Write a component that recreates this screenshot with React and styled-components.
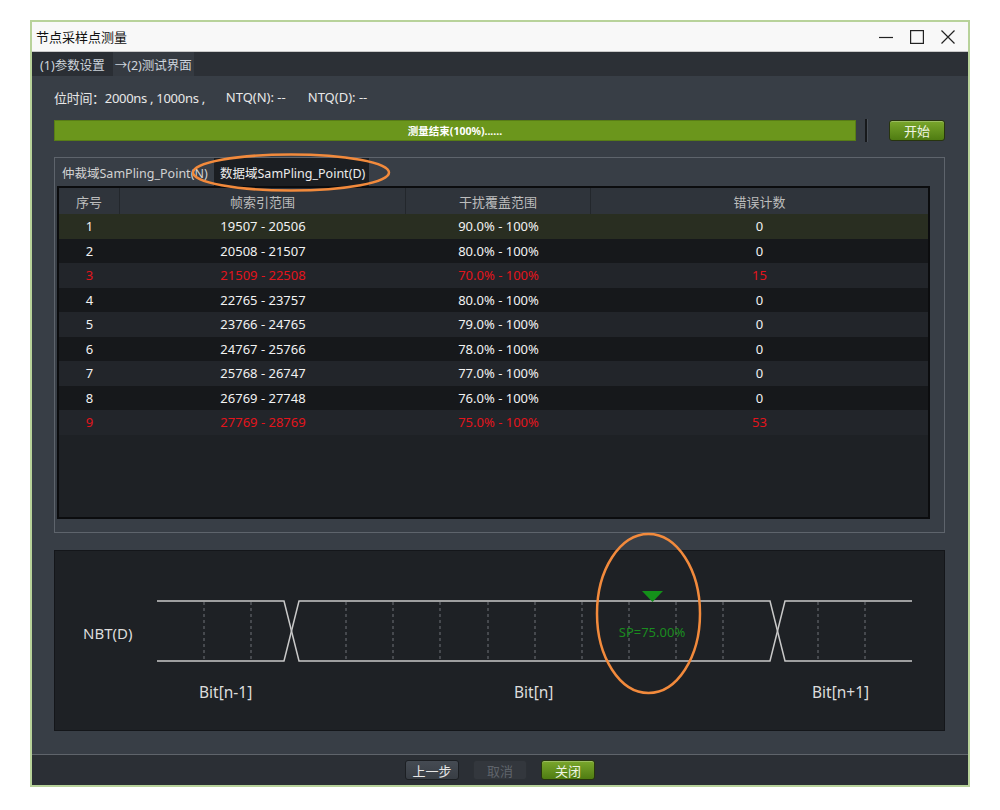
import React from 'react'
import styled, { createGlobalStyle } from 'styled-components'

const GlobalStyle = createGlobalStyle`
    html, body {
        margin: 0;
        padding: 0;
        background: #ffffff;
    }
    body {
        font-family: "Noto Sans", "Noto Sans CJK SC", sans-serif;
    }
`

const Page = styled.div`
    position: relative;
    width: 1000px;
    height: 810px;
    overflow: hidden;
`

const Window = styled.div`
    margin: 20px 0 0 30px;
    width: 940px;
    box-sizing: border-box;
    border: 2px solid #b8d29a;
    background: #383e46;
    display: flex;
    flex-direction: column;
`

const TitleBar = styled.div`
    height: 29px;
    display: flex;
    align-items: center;
    justify-content: space-between;
    background: #f8f8f8;
    border-bottom: 1px solid #c9c9c9;
    padding: 0 5px 0 4px;
`

const Title = styled.span`
    font-size: 13px;
    color: #111;
    font-family: "Noto Sans CJK SC", sans-serif;
`

const Controls = styled.div`
    display: flex;
`

const ControlButton = styled.div`
    width: 31px;
    height: 29px;
    display: flex;
    align-items: center;
    justify-content: center;
`

const StepBar = styled.div`
    height: 24px;
    display: flex;
    background: #2c3036;
`

const Step = styled.div`
    display: flex;
    align-items: center;
    padding: 0 ${p => p.$pad}px;
    font-size: 12.5px;
    color: #cdd4dc;
    background: ${p => p.$current ? '#353a41' : '#2a2e34'};
    white-space: nowrap;
`

const Body = styled.div`
    padding: 11px 23px 23px 22px;
    display: flex;
    flex-direction: column;
`

const InfoRow = styled.div`
    height: 20px;
    display: flex;
    align-items: center;
    font-size: 13px;
    color: #e8e8e8;
    white-space: nowrap;
`

const InfoItem = styled.span`
    margin-left: ${p => p.$gap || 0}px;
    letter-spacing: ${p => p.$tight ? '-0.3px' : '0'};
`

const ProgressRow = styled.div`
    margin-top: 13px;
    height: 21px;
    display: flex;
    align-items: stretch;
`

const ProgressBar = styled.div`
    flex: 1;
    background: #6b961c;
    border: 1px solid #587d16;
    display: flex;
    align-items: center;
    justify-content: center;
    font-size: 10.5px;
    font-weight: 700;
    color: #ffffff;
`

const Divider = styled.div`
    width: 2px;
    margin-left: 9px;
    margin-top: -1px;
    margin-bottom: -1px;
    background: #17191c;
    border-right: 1px solid #4a5058;
`

const GreenButton = styled.button`
    width: ${p => p.$w || 56}px;
    height: ${p => p.$h || 21}px;
    margin-left: ${p => p.$ml || 0}px;
    border: 1px solid #27340f;
    border-radius: 3px;
    background: linear-gradient(#7aa72c, #4f7c12);
    box-shadow: inset 0 1px 0 rgba(255, 255, 255, 0.25);
    color: #eef4e2;
    font-family: "Noto Sans CJK SC", sans-serif;
    font-size: 13px;
    padding: 0;
    display: flex;
    align-items: center;
    justify-content: center;
`

const TabBox = styled.div`
    margin-top: 16px;
    height: 376px;
    box-sizing: border-box;
    border: 1px solid #5e646c;
    padding: 0 14px 13px 1px;
    display: flex;
    flex-direction: column;
`

const Tabs = styled.div`
    height: 28px;
    display: flex;
`

const Tab = styled.div`
    width: ${p => p.$w}px;
    box-sizing: border-box;
    padding-left: 6px;
    display: flex;
    align-items: center;
    font-size: 12.5px;
    color: ${p => p.$active ? '#ececec' : '#d2d2d2'};
    background: ${p => p.$active ? '#1b1e22' : 'transparent'};
    white-space: nowrap;
    overflow: hidden;
`

const Table = styled.div`
    flex: 1;
    margin-left: 1px;
    border: 2px solid #0b0c0e;
    background: #1e2125;
    display: flex;
    flex-direction: column;
`

const Row = styled.div`
    display: grid;
    grid-template-columns: 61px 286px 185px 1fr;
    height: ${p => p.$header ? 26 : 24.5}px;
    background: ${p => p.$bg};
`

const Cell = styled.div`
    display: flex;
    align-items: center;
    justify-content: center;
    font-size: 13px;
    color: ${p => p.$red ? '#e3141c' : '#f2f2f2'};
    white-space: nowrap;
`

const HeadCell = styled(Cell)`
    color: #bdbdbd;
    font-family: "Noto Sans CJK SC", sans-serif;
    border-right: 1px solid #23272c;
    &:last-child {
        border-right: none;
    }
`

const WavePanel = styled.div`
    margin-top: 17px;
    height: 181px;
    box-sizing: border-box;
    border: 1px solid #14161a;
    background: #1e2125;
`

const BottomBar = styled.div`
    height: 30px;
    border-top: 1px solid #5f646b;
    background: #2b2f35;
    display: flex;
    align-items: center;
    justify-content: center;
    gap: 14px;
`

const DarkButton = styled.button`
    width: 54px;
    height: 20px;
    border: 1px solid ${p => p.$disabled ? '#2c3035' : '#1c1f23'};
    border-radius: 3px;
    background: ${p => p.$disabled ? '#33373d' : 'linear-gradient(#454b53, #383d44)'};
    color: ${p => p.$disabled ? '#5f646b' : '#e6e6e6'};
    font-family: "Noto Sans CJK SC", sans-serif;
    font-size: 13px;
    padding: 0;
    display: flex;
    align-items: center;
    justify-content: center;
`

const Overlay = styled.svg`
    position: absolute;
    left: 0;
    top: 0;
    pointer-events: none;
`

const rows = [
    ['1', '19507 - 20506', '90.0% - 100%', '0'],
    ['2', '20508 - 21507', '80.0% - 100%', '0'],
    ['3', '21509 - 22508', '70.0% - 100%', '15', true],
    ['4', '22765 - 23757', '80.0% - 100%', '0'],
    ['5', '23766 - 24765', '79.0% - 100%', '0'],
    ['6', '24767 - 25766', '78.0% - 100%', '0'],
    ['7', '25768 - 26747', '77.0% - 100%', '0'],
    ['8', '26769 - 27748', '76.0% - 100%', '0'],
    ['9', '27769 - 28769', '75.0% - 100%', '53', true],
]

const rowBg = (i) => {
    if (i === 0) return '#292e21'
    return i % 2 === 1 ? '#16181b' : '#22252a'
}

const dashes = [149, 196, 291, 338, 385, 433, 480, 527, 574, 621, 668, 763, 810]

const Waveform = () => (
    <svg width="888" height="179" viewBox="0 0 888 179" style={{ display: 'block' }}>
        {dashes.map(x => (
            <line key={x} x1={x} y1="51" x2={x} y2="110" stroke="#6e7278" strokeWidth="1" strokeDasharray="3 3" />
        ))}
        <g stroke="#c9c9c9" strokeWidth="1.5" fill="none">
            <polyline points="102,50 229,50 244,110 715,110 730,50 857,50" />
            <polyline points="102,110 229,110 244,50 715,50 730,110 857,110" />
        </g>
        <polygon points="587,40 608,40 597.5,51" fill="#14911a" />
        <g fontFamily="Noto Sans, sans-serif" fill="#dcdcdc">
            <text x="28" y="88" fontSize="15">NBT(D)</text>
            <text x="144" y="147" fontSize="15.5">Bit[n-1]</text>
            <text x="459" y="147" fontSize="15.5">Bit[n]</text>
            <text x="757" y="147" fontSize="15.5">Bit[n+1]</text>
        </g>
        <text x="597" y="86" fontSize="13" textAnchor="middle" fill="#1a8c1f" fontFamily="Noto Sans, sans-serif">SP=75.00%</text>
    </svg>
)

const App = () => {
    return (
        <Page>
            <GlobalStyle />
            <Window>
                <TitleBar>
                    <Title>节点采样点测量</Title>
                    <Controls>
                        <ControlButton>
                            <svg width="14" height="14" viewBox="0 0 14 14">
                                <line x1="0" y1="7.5" x2="14" y2="7.5" stroke="#222" strokeWidth="1.2" />
                            </svg>
                        </ControlButton>
                        <ControlButton>
                            <svg width="14" height="14" viewBox="0 0 14 14">
                                <rect x="0.6" y="0.6" width="12.8" height="12.8" fill="none" stroke="#222" strokeWidth="1.2" />
                            </svg>
                        </ControlButton>
                        <ControlButton>
                            <svg width="14" height="14" viewBox="0 0 14 14">
                                <path d="M0.5 0.5 L13.5 13.5 M13.5 0.5 L0.5 13.5" stroke="#222" strokeWidth="1.2" />
                            </svg>
                        </ControlButton>
                    </Controls>
                </TitleBar>

                <StepBar>
                    <Step $pad={8}>(1)参数设置</Step>
                    <Step $pad={2} $current>→(2)测试界面</Step>
                </StepBar>

                <Body>
                    <InfoRow>
                        <InfoItem $tight>位时间：2000ns , 1000ns ,</InfoItem>
                        <InfoItem $gap={21}>NTQ(N): --</InfoItem>
                        <InfoItem $gap={22}>NTQ(D): --</InfoItem>
                    </InfoRow>

                    <ProgressRow>
                        <ProgressBar>测量结束(100%)......</ProgressBar>
                        <Divider />
                        <GreenButton $ml={21}>开始</GreenButton>
                    </ProgressRow>

                    <TabBox>
                        <Tabs>
                            <Tab $w={158}>仲裁域SamPling_Point(N)</Tab>
                            <Tab $w={155} $active>数据域SamPling_Point(D)</Tab>
                        </Tabs>
                        <Table>
                            <Row $header $bg="#2f343b">
                                <HeadCell>序号</HeadCell>
                                <HeadCell>帧索引范围</HeadCell>
                                <HeadCell>干扰覆盖范围</HeadCell>
                                <HeadCell>错误计数</HeadCell>
                            </Row>
                            {rows.map((r, i) => (
                                <Row key={r[0]} $bg={rowBg(i)}>
                                    <Cell $red={r[4]}>{r[0]}</Cell>
                                    <Cell $red={r[4]}>{r[1]}</Cell>
                                    <Cell $red={r[4]}>{r[2]}</Cell>
                                    <Cell $red={r[4]}>{r[3]}</Cell>
                                </Row>
                            ))}
                        </Table>
                    </TabBox>

                    <WavePanel>
                        <Waveform />
                    </WavePanel>
                </Body>

                <BottomBar>
                    <DarkButton>上一步</DarkButton>
                    <DarkButton $disabled>取消</DarkButton>
                    <GreenButton $w={54} $h={20}>关闭</GreenButton>
                </BottomBar>
            </Window>

            {/* orange annotation rings */}
            <Overlay width="1000" height="810" viewBox="0 0 1000 810">
                <ellipse cx="291" cy="172.5" rx="98" ry="18" fill="none" stroke="#f28a3c" strokeWidth="2.5" />
                <ellipse cx="648.5" cy="613.5" rx="51.5" ry="79.5" fill="none" stroke="#f28a3c" strokeWidth="2.5" />
            </Overlay>
        </Page>
    )
}

export default App
